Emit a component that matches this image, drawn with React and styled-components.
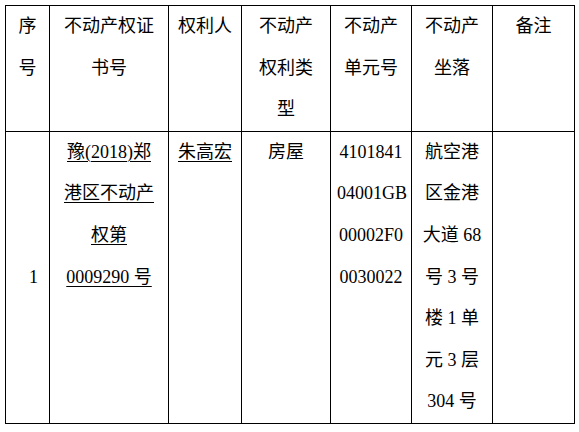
import styled, { createGlobalStyle } from "styled-components";

const GlobalStyle = createGlobalStyle`
  html, body {
    margin: 0;
    padding: 0;
    background: #fff;
  }
  body {
    font-family: "Liberation Serif", "Noto Sans CJK SC", serif;
    color: #000;
  }
`;

// 表格外层
const Page = styled.div`
  padding: 5px 0 0 5px;
`;

const Table = styled.table`
  border-collapse: collapse;
  table-layout: fixed;
  width: 569px;
  font-size: 18px;
  line-height: 41.6px;
`;

const Cell = styled.td`
  border: 1px solid #000;
  padding: ${(p) => p.$pad || "0 6px"};
  vertical-align: ${(p) => p.$valign || "top"};
  text-align: ${(p) => p.$align || "center"};
  white-space: nowrap;
  overflow: hidden;
`;

const HeadCell = styled(Cell).attrs({ as: "th" })`
  font-weight: normal;
`;

const Line = styled.span`
  display: block;
  height: 41.6px;
`;

const Under = styled.span`
  text-decoration: underline;
  text-decoration-thickness: 1px;
  text-underline-offset: 3px;
`;

const widths = [44, 119, 73, 89, 81, 81, 82];

const headers = [
  ["序", "号"],
  ["不动产权证", "书号"],
  ["权利人"],
  ["不动产", "权利类", "型"],
  ["不动产", "单元号"],
  ["不动产", "坐落"],
  ["备注"],
];

const Lines = ({ lines, underline }) =>
  lines.map((t, i) => (
    <Line key={i}>{underline ? <Under>{t}</Under> : t}</Line>
  ));

export default function App() {
  return (
    <>
      <GlobalStyle />
      <Page>
        <Table>
          <colgroup>
            {widths.map((w, i) => (
              <col key={i} style={{ width: w }} />
            ))}
          </colgroup>
          <thead>
            <tr>
              {headers.map((h, i) => (
                <HeadCell key={i}>
                  <Lines lines={h} />
                </HeadCell>
              ))}
            </tr>
          </thead>
          <tbody>
            <tr>
              <Cell $valign="middle" $pad="0 0 0 12px">
                <Line>1</Line>
              </Cell>
              <Cell>
                <Lines
                  underline
                  lines={["豫(2018)郑", "港区不动产", "权第", "0009290 号"]}
                />
              </Cell>
              <Cell>
                <Lines underline lines={["朱高宏"]} />
              </Cell>
              <Cell>
                <Lines lines={["房屋"]} />
              </Cell>
              <Cell>
                <Lines lines={["4101841", "04001GB", "00002F0", "0030022"]} />
              </Cell>
              <Cell>
                <Lines
                  lines={[
                    "航空港",
                    "区金港",
                    "大道 68",
                    "号 3 号",
                    "楼 1 单",
                    "元 3 层",
                    "304 号",
                  ]}
                />
              </Cell>
              <Cell />
            </tr>
          </tbody>
        </Table>
      </Page>
    </>
  );
}
